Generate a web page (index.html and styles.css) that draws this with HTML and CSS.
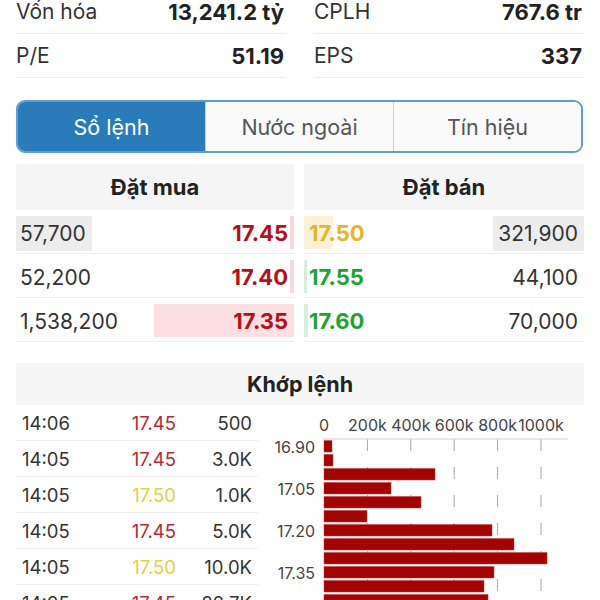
FILE: index.html
```html
<!DOCTYPE html>
<html lang="vi">
<head>
<meta charset="utf-8">
<link rel="stylesheet" href="styles.css">
</head>
<body>
<div class="page">
  <div class="stats">
    <div class="stat"><span class="lbl">Vốn hóa</span><span class="val">13,241.2 tỷ</span></div>
    <div class="stat"><span class="lbl">CPLH</span><span class="val">767.6 tr</span></div>
    <div class="stat"><span class="lbl">P/E</span><span class="val">51.19</span></div>
    <div class="stat"><span class="lbl">EPS</span><span class="val">337</span></div>
  </div>

  <div class="tabs">
    <div class="tab active">Sổ lệnh</div>
    <div class="tab">Nước ngoài</div>
    <div class="tab">Tín hiệu</div>
  </div>

  <div class="book">
    <div class="side buy">
      <div class="side-head">Đặt mua</div>
      <div class="brow"><span class="depth pink" style="width:4px"></span><span class="vol hl">57,700</span><span class="px red">17.45</span></div>
      <div class="brow"><span class="depth pink" style="width:4px"></span><span class="vol">52,200</span><span class="px red">17.40</span></div>
      <div class="brow"><span class="depth pink2" style="width:140px"></span><span class="vol">1,538,200</span><span class="px red">17.35</span></div>
    </div>
    <div class="side sell">
      <div class="side-head">Đặt bán</div>
      <div class="brow"><span class="depth yel" style="width:29px"></span><span class="px yellow">17.50</span><span class="vol hl">321,900</span></div>
      <div class="brow"><span class="depth grn" style="width:3px"></span><span class="px green">17.55</span><span class="vol">44,100</span></div>
      <div class="brow"><span class="depth grn" style="width:4px"></span><span class="px green">17.60</span><span class="vol">70,000</span></div>
    </div>
  </div>

  <div class="match">
    <div class="match-head">Khớp lệnh</div>
    <div class="match-body">
      <div class="trades">
        <div class="trow"><span>14:06</span><span class="tp r">17.45</span><span class="tv">500</span></div>
        <div class="trow"><span>14:05</span><span class="tp r">17.45</span><span class="tv">3.0K</span></div>
        <div class="trow"><span>14:05</span><span class="tp y">17.50</span><span class="tv">1.0K</span></div>
        <div class="trow"><span>14:05</span><span class="tp r">17.45</span><span class="tv">5.0K</span></div>
        <div class="trow"><span>14:05</span><span class="tp y">17.50</span><span class="tv">10.0K</span></div>
        <div class="trow"><span>14:05</span><span class="tp r">17.45</span><span class="tv">22.7K</span></div>
        <div class="trow"><span>14:05</span><span class="tp r">17.45</span><span class="tv">1.0K</span></div>
      </div>
      <div class="chart">
        <svg class="chart-svg" width="326" height="210" viewBox="0 0 326 210">
          <g class="grid">
            <line x1="109.4" y1="34" x2="109.4" y2="210"/>
            <line x1="152.8" y1="34" x2="152.8" y2="210"/>
            <line x1="196.2" y1="34" x2="196.2" y2="210"/>
            <line x1="239.6" y1="34" x2="239.6" y2="210"/>
            <line x1="283" y1="34" x2="283" y2="210"/>
          </g>
          <line class="axis" x1="65" y1="34" x2="310" y2="34"/>
          <g class="xlab">
            <text x="66" y="26">0</text>
            <text x="109.4" y="26">200k</text>
            <text x="152.8" y="26">400k</text>
            <text x="196.2" y="26">600k</text>
            <text x="239.6" y="26">800k</text>
            <text x="283" y="26">1000k</text>
          </g>
          <g class="ylab">
            <text x="57" y="47.5">16.90</text>
            <text x="57" y="89.5">17.05</text>
            <text x="57" y="131.5">17.20</text>
            <text x="57" y="173.5">17.35</text>
          </g>
          <g class="bars">
            <rect x="66" y="35.5" width="8" height="11.5"/>
            <rect x="66" y="49.5" width="9" height="11.5"/>
            <rect x="66" y="63.5" width="111" height="11.5"/>
            <rect x="66" y="77.5" width="67" height="11.5"/>
            <rect x="66" y="91.5" width="97" height="11.5"/>
            <rect x="66" y="105.5" width="43" height="11.5"/>
            <rect x="66" y="119.5" width="168" height="11.5"/>
            <rect x="66" y="133.5" width="190" height="11.5"/>
            <rect x="66" y="147.5" width="223" height="11.5"/>
            <rect x="66" y="161.5" width="170" height="11.5"/>
            <rect x="66" y="175.5" width="160" height="11.5"/>
            <rect x="66" y="189.5" width="164" height="11.5"/>
            <rect x="66" y="203.5" width="150" height="11.5"/>
          </g>
        </svg>
      </div>
    </div>
  </div>
</div>
</body>
</html>
```
FILE: styles.css
```css
html, body {
  margin: 0;
  padding: 0;
  background: #fff;
  overflow: hidden;
}

body {
  font-family: Inter, "Liberation Sans", sans-serif;
  color: #222;
}

.page {
  padding: 0 16px;
}

/* Top statistics */
.stats {
  display: grid;
  grid-template-columns: 1fr 1fr;
  column-gap: 28px;
  margin-top: -10px;
}

.stat {
  display: flex;
  justify-content: space-between;
  align-items: center;
  height: 43px;
  border-bottom: 1px solid #ededed;
  padding-right: 2px;
}

.stat .lbl {
  font-size: 21px;
  color: #333;
}

.stat .val {
  font-size: 22px;
  font-weight: 700;
  color: #222;
}

/* Segmented tabs */
.tabs {
  margin-top: 22px;
  display: flex;
  height: 53px;
  box-sizing: border-box;
  border: 2px solid #5f9dce;
  border-radius: 9px;
  overflow: hidden;
  width: 567px;
}

.tab {
  flex: 1;
  display: flex;
  align-items: center;
  justify-content: center;
  font-size: 21.5px;
  color: #555;
  background: #fafafa;
  border-left: 1px solid #cfcfcf;
}

.tab.active {
  background: #2a7bb9;
  color: #fff;
  border-left: none;
}

/* Order book */
.book {
  margin-top: 11px;
  display: grid;
  grid-template-columns: 278px 1fr;
  column-gap: 10px;
}

.side-head {
  height: 46px;
  background: #f5f5f5;
  display: flex;
  align-items: center;
  justify-content: center;
  font-weight: 700;
  font-size: 22px;
  color: #222;
}

.brow {
  position: relative;
  height: 43px;
  border-bottom: 1px solid #eee;
  display: flex;
  align-items: center;
  justify-content: space-between;
  font-size: 21px;
}

.depth {
  position: absolute;
  top: 6px;
  height: 33px;
}

.buy .depth {
  right: 0;
}

.sell .depth {
  left: 0;
}

.depth.pink {
  background: #f7d9dc;
}

.depth.pink2 {
  background: #fcdfe1;
}

.depth.yel {
  background: #fbf1d8;
}

.depth.grn {
  background: #d5efd8;
}

.vol {
  position: relative;
  display: flex;
  align-items: center;
  height: 35px;
  margin-top: 4px;
  padding: 0 6px 0 4px;
  color: #333;
}

.sell .vol {
  padding: 0 6px 0 5px;
}

.vol.hl {
  background: #ececec;
}

.px {
  position: relative;
  font-size: 22px;
  font-weight: 700;
  padding: 0 6px;
  margin-top: 3px;
}

.sell .px {
  padding: 0 5px;
}

.red {
  color: #b3121d;
}

.yellow {
  color: #e6b523;
}

.green {
  color: #1fa332;
}

/* Matched orders */
.match {
  margin-top: 21px;
}

.match-head {
  height: 42px;
  background: #f5f5f5;
  display: flex;
  align-items: center;
  justify-content: center;
  font-weight: 700;
  font-size: 21.5px;
  color: #222;
}

.match-body {
  display: grid;
  grid-template-columns: 242px 1fr;
}

.trow {
  display: grid;
  grid-template-columns: 1fr 76px 76px;
  align-items: center;
  height: 35px;
  padding: 0 6px;
  border-bottom: 1px solid #eee;
  font-size: 18.5px;
  color: #333;
}

.tp,
.tv {
  text-align: right;
}

.tp.r {
  color: #b52a33;
}

.tp.y {
  color: #e8cf3c;
}

.chart-svg {
  display: block;
}

.grid line {
  stroke: #a8a8a8;
  stroke-width: 1;
  stroke-dasharray: 12 16;
}

.axis {
  stroke: #cfcfcf;
  stroke-width: 1;
}

.xlab text {
  font-family: Inter, "Liberation Sans", sans-serif;
  font-size: 16px;
  fill: #444;
  text-anchor: middle;
}

.ylab text {
  font-family: Inter, "Liberation Sans", sans-serif;
  font-size: 16px;
  fill: #444;
  text-anchor: end;
}

.bars rect {
  fill: #a20303;
  stroke: #c43a3a;
  stroke-width: 0.5;
}
```
